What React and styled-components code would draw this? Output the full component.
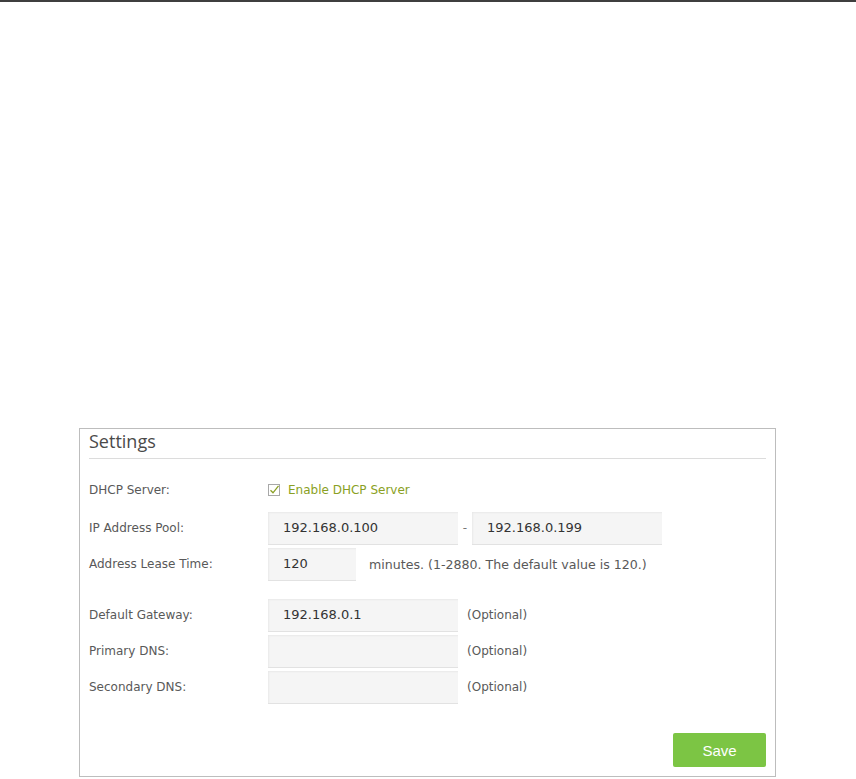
import React from "react";
import styled, { createGlobalStyle } from "styled-components";

const GlobalStyle = createGlobalStyle`
  html, body {
    margin: 0;
    padding: 0;
    background: #ffffff;
  }
  body {
    font-family: "DejaVu Sans", Verdana, sans-serif;
  }
`;

const TopRule = styled.div`
  height: 2px;
  background: #3f3f3f;
`;

const Panel = styled.section`
  margin: 426px 0 0 79px;
  width: 695px;
  height: 347px;
  border: 1px solid #bdbdbd;
  background: #fff;
  display: flex;
  flex-direction: column;
`;

const Title = styled.h2`
  margin: 0 9px;
  padding: 1px 0 6px;
  font-family: "Open Sans", "Liberation Sans", Arial, sans-serif;
  font-weight: 400;
  font-size: 18px;
  line-height: 22px;
  color: #4a4a4a;
  border-bottom: 1px solid #dcdcdc;
`;

const Form = styled.div`
  padding: 16px 9px 0;
  display: flex;
  flex-direction: column;
  gap: 4px;
`;

const Row = styled.div`
  display: flex;
  align-items: center;
  height: ${(p) => (p.$short ? "30px" : "32px")};
  margin-top: ${(p) => (p.$spaced ? "15px" : "0")};
  margin-bottom: ${(p) => (p.$short ? "3px" : "0")};
  font-size: 12px;
  color: #595959;
`;

const Label = styled.div`
  width: 179px;
  flex: none;
`;

const Field = styled.div`
  box-sizing: border-box;
  width: ${(p) => p.$w || 190}px;
  height: 33px;
  flex: none;
  padding: 0 15px;
  display: flex;
  align-items: center;
  background: #f5f5f5;
  border-bottom: 1px solid #e2e2e2;
  box-shadow: inset 1px 1px 2px rgba(0, 0, 0, 0.05);
  font-size: 13px;
  color: #333;
`;

const Dash = styled.span`
  width: 14px;
  text-align: center;
  color: #777;
`;

const Note = styled.span`
  margin-left: ${(p) => p.$gap || 9}px;
  font-size: ${(p) => p.$size || 12}px;
  color: #595959;
`;

const Check = styled.label`
  display: flex;
  align-items: center;
  gap: 8px;
  color: #8a9f24;
  font-size: 12px;
`;

const Footer = styled.div`
  margin-top: auto;
  padding: 0 9px 9px;
  display: flex;
  justify-content: flex-end;
`;

const SaveButton = styled.button`
  width: 93px;
  height: 34px;
  border: none;
  border-radius: 2px;
  background: #7cc544;
  color: #fff;
  font-family: "Liberation Sans", Arial, sans-serif;
  font-size: 15px;
  cursor: pointer;
`;

const CheckIcon = () => (
  <svg width="12" height="12" viewBox="0 0 12 12">
    <rect x="0.5" y="0.5" width="11" height="11" fill="#fff" stroke="#a8a8a8" />
    <path d="M2.5 6.2 L5 8.8 L10.5 1.8" fill="none" stroke="#8a9f24" strokeWidth="1.3" />
  </svg>
);

export default function App() {
  return (
    <>
      <GlobalStyle />
      <TopRule />
      <Panel>
        <Title>Settings</Title>
        <Form>
          <Row $short>
            <Label>DHCP Server:</Label>
            <Check>
              <CheckIcon />
              Enable DHCP Server
            </Check>
          </Row>
          <Row>
            <Label>IP Address Pool:</Label>
            <Field>192.168.0.100</Field>
            <Dash>-</Dash>
            <Field>192.168.0.199</Field>
          </Row>
          <Row>
            <Label>Address Lease Time:</Label>
            <Field $w={88}>120</Field>
            <Note $gap={13} $size={12.6}>
              minutes. (1-2880. The default value is 120.)
            </Note>
          </Row>
          <Row $spaced>
            <Label>Default Gateway:</Label>
            <Field>192.168.0.1</Field>
            <Note>(Optional)</Note>
          </Row>
          <Row>
            <Label>Primary DNS:</Label>
            <Field />
            <Note>(Optional)</Note>
          </Row>
          <Row>
            <Label>Secondary DNS:</Label>
            <Field />
            <Note>(Optional)</Note>
          </Row>
        </Form>
        <Footer>
          <SaveButton>Save</SaveButton>
        </Footer>
      </Panel>
    </>
  );
}
